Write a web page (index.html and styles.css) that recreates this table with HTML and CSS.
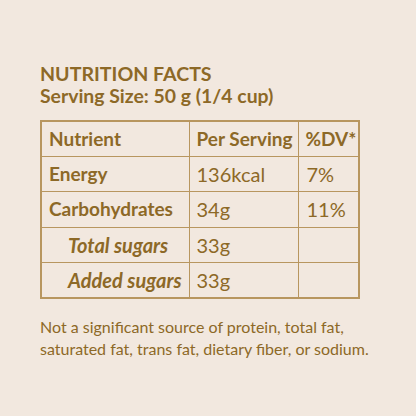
FILE: index.html
```html
<!DOCTYPE html>
<html>
<head>
<meta charset="utf-8">
<link rel="stylesheet" href="styles.css">
</head>
<body>
<div class="card">
  <h1 class="title">NUTRITION FACTS</h1>
  <p class="serving">Serving Size: 50 g (1/4 cup)</p>
  <table class="facts">
    <tr class="head">
      <th class="c1">Nutrient</th>
      <th class="c2">Per Serving</th>
      <th class="c3">%DV*</th>
    </tr>
    <tr>
      <td class="name">Energy</td>
      <td>136kcal</td>
      <td class="dv">7%</td>
    </tr>
    <tr>
      <td class="name">Carbohydrates</td>
      <td>34g</td>
      <td class="dv">11%</td>
    </tr>
    <tr>
      <td class="sub">Total sugars</td>
      <td>33g</td>
      <td class="dv"></td>
    </tr>
    <tr>
      <td class="sub">Added sugars</td>
      <td>33g</td>
      <td class="dv"></td>
    </tr>
  </table>
  <p class="note">Not a significant source of protein, total fat, saturated fat, trans fat, dietary fiber, or sodium.</p>
</div>
</body>
</html>
```
FILE: styles.css
```css
html, body {
  margin: 0;
  padding: 0;
  background: #f2e8df;
}
body {
  width: 416px;
  height: 416px;
  font-family: Lato, "Open Sans", sans-serif;
  color: #8d6927;
}
.card {
  padding: 63px 0 0 40px;
}
.title {
  margin: 0;
  font-size: 19.6px;
  font-weight: 700;
  line-height: 22px;
}
.serving {
  margin: 0;
  font-size: 19.4px;
  font-weight: 700;
  line-height: 22px;
}
.facts {
  margin-top: 13px;
  border-collapse: collapse;
  border: 2px solid #b8965f;
  font-size: 20px;
}
.facts th, .facts td {
  border: 1.5px solid #b8965f;
  height: 35.4px;
  padding: 0 0 0 7px;
  text-align: left;
  box-sizing: border-box;
  line-height: 20px;
}
.facts th {
  font-weight: 700;
  font-size: 19px;
}
.c1 { width: 148px; }
.c2 { width: 109px; }
.c3 { width: 61px; }
.name { font-weight: 700; font-size: 19px; }
.sub {
  font-weight: 700;
  font-style: italic;
  font-size: 20px;
  padding-left: 26px !important;
}
.dv { padding-left: 8px !important; }
.note {
  margin: 17px 0 0;
  font-size: 16px;
  line-height: 22px;
  width: 340px;
}
```
